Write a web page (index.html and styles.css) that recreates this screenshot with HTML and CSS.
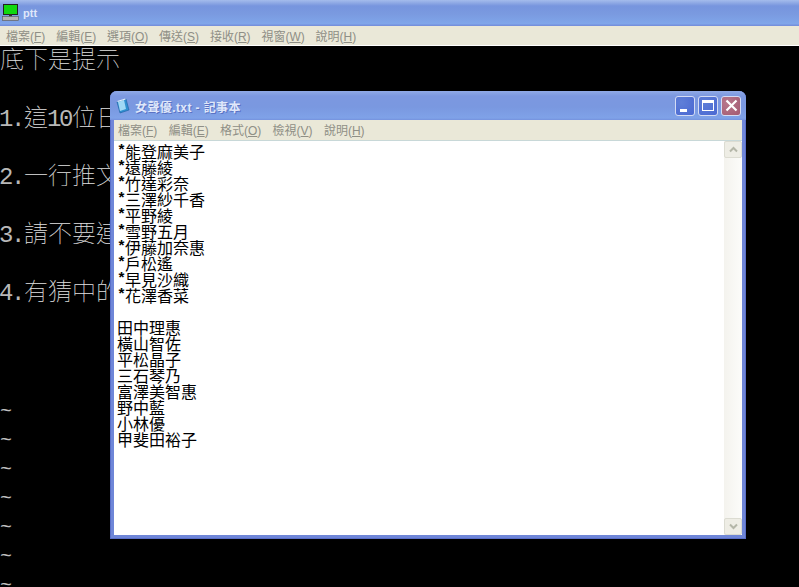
FILE: index.html
```html
<!DOCTYPE html>
<html lang="zh-Hant">
<head>
<meta charset="utf-8">
<title>ptt</title>
<link rel="stylesheet" href="styles.css">
</head>
<body>
<div class="desktop">
  <div class="term-window">
    <header class="term-title">
      <svg class="term-icon" width="17" height="17" viewBox="0 0 17 17">
        <rect x="1.5" y="0.5" width="14" height="10" fill="#10d810" stroke="#222"/>
        <rect x="7" y="10.5" width="3" height="2" fill="#333"/>
        <rect x="0.5" y="12.5" width="16" height="4" fill="#b4b4b4" stroke="#555" stroke-width="0.6"/>
      </svg>
      <span class="term-name">ptt</span>
    </header>
    <nav class="menubar term-menu">
      <span>檔案(<u>F</u>)</span><span>編輯(<u>E</u>)</span><span>選項(<u>O</u>)</span><span>傳送(<u>S</u>)</span><span>接收(<u>R</u>)</span><span>視窗(<u>W</u>)</span><span>說明(<u>H</u>)</span>
    </nav>
    <main class="screen">
      <div class="screen-line">底下是提示</div>
      <div class="screen-line"></div>
      <div class="screen-line"><span class="half">1.</span>這<span class="half">10</span>位日</div>
      <div class="screen-line"></div>
      <div class="screen-line"><span class="half">2.</span>一行推文</div>
      <div class="screen-line"></div>
      <div class="screen-line"><span class="half">3.</span>請不要連</div>
      <div class="screen-line"></div>
      <div class="screen-line"><span class="half">4.</span>有猜中的</div>
      <div class="screen-line"></div>
      <div class="screen-line"></div>
      <div class="screen-line"></div>
      <div class="tilde">~</div>
      <div class="tilde">~</div>
      <div class="tilde">~</div>
      <div class="tilde">~</div>
      <div class="tilde">~</div>
      <div class="tilde">~</div>
      <div class="tilde">~</div>
    </main>
  </div>

  <section class="notepad">
    <header class="np-title">
      <svg class="np-icon" width="16" height="16" viewBox="0 0 16 16">
        <path d="M2 4 L11 1 L14 12 L5 15 Z" fill="#2f8fd0" stroke="#1c5f9f" stroke-width="0.6"/>
        <path d="M3 4 L9 2 L11 11 L5 13 Z" fill="#9fd8f5"/>
        <path d="M2.5 3.5 L10.5 1" stroke="#e8f4ff" stroke-width="1.2" fill="none"/>
      </svg>
      <span class="np-name">女聲優.txt - 記事本</span>
      <div class="np-buttons">
        <span class="np-btn np-min"><i></i></span>
        <span class="np-btn np-max"><i></i></span>
        <span class="np-btn np-close">
          <svg width="13" height="13" viewBox="0 0 13 13"><path d="M1.5 1.5 L11.5 11.5 M11.5 1.5 L1.5 11.5" stroke="#fff" stroke-width="2.2"/></svg>
        </span>
      </div>
    </header>
    <nav class="menubar np-menu">
      <span>檔案(<u>F</u>)</span><span>編輯(<u>E</u>)</span><span>格式(<u>O</u>)</span><span>檢視(<u>V</u>)</span><span>說明(<u>H</u>)</span>
    </nav>
    <div class="np-client">
      <div class="np-text">
        <div><b>*</b>能登麻美子</div>
        <div><b>*</b>遠藤綾</div>
        <div><b>*</b>竹達彩奈</div>
        <div><b>*</b>三澤紗千香</div>
        <div><b>*</b>平野綾</div>
        <div><b>*</b>雪野五月</div>
        <div><b>*</b>伊藤加奈惠</div>
        <div><b>*</b>戶松遙</div>
        <div><b>*</b>早見沙織</div>
        <div><b>*</b>花澤香菜</div>
        <div class="np-blank"></div>
        <div>田中理惠</div>
        <div>橫山智佐</div>
        <div>平松晶子</div>
        <div>三石琴乃</div>
        <div>富澤美智惠</div>
        <div>野中藍</div>
        <div>小林優</div>
        <div>甲斐田裕子</div>
      </div>
      <div class="np-scroll">
        <span class="np-arrow">
          <svg width="9" height="7" viewBox="0 0 9 7"><path d="M1 5.5 L4.5 2 L8 5.5" fill="none" stroke="#b4b6a8" stroke-width="2"/></svg>
        </span>
        <span class="np-arrow">
          <svg width="9" height="7" viewBox="0 0 9 7"><path d="M1 1.5 L4.5 5 L8 1.5" fill="none" stroke="#b4b6a8" stroke-width="2"/></svg>
        </span>
      </div>
    </div>
  </section>
</div>
</body>
</html>
```

FILE: styles.css
```css
* { box-sizing: border-box; }

html, body {
  margin: 0;
  padding: 0;
  width: 799px;
  height: 587px;
  overflow: hidden;
  background: #000;
}

.desktop {
  position: relative;
  width: 799px;
  height: 587px;
  overflow: hidden;
}

.term-window {
  display: flex;
  flex-direction: column;
  height: 587px;
}

.term-title {
  height: 26px;
  flex: none;
  display: flex;
  align-items: center;
  gap: 4px;
  padding: 0 0 1px 2px;
  background: linear-gradient(#a4bcec 0, #8ea8e4 3px, #7795de 6px, #7a9ae0 14px, #80a6ea 24px, #7590dc 25px, #7590dc 26px);
}

.term-name,
.np-name {
  font-family: "Liberation Sans", "Noto Sans CJK TC", sans-serif;
  font-weight: 700;
  color: #dfe7fa;
}

.term-name {
  padding-top: 1px;
  font-size: 11px;
}

.menubar {
  display: flex;
  align-items: center;
  background: #eae8d8;
  font-family: "Liberation Sans", "Noto Sans CJK TC", sans-serif;
  font-size: 12px;
  color: #8f8f86;
}

.term-menu {
  height: 20px;
  flex: none;
  padding-left: 6px;
  border-bottom: 1px solid #fff;
}

.term-menu span { margin-right: 10.8px; }

.screen {
  flex: 1;
  padding-top: 1px;
  background: #000;
  color: #e2e2e2;
  font-family: "Liberation Mono", "Noto Sans CJK TC", monospace;
  font-size: 24px;
  font-weight: 100;
}

.screen-line {
  height: 29px;
  line-height: 29px;
  white-space: nowrap;
}

.half {
  letter-spacing: -2.4px;
  color: #b8b8b8;
  margin-left: -1px;
  margin-right: 1px;
}

.tilde {
  height: 29px;
  line-height: 33px;
  font-size: 20px;
  color: #c0c0c0;
}

.notepad {
  position: absolute;
  left: 110px;
  top: 91px;
  width: 636px;
  height: 448px;
  display: flex;
  flex-direction: column;
  padding: 0 4px 4px;
  background: #6f86d8;
  border-radius: 7px 7px 0 0;
  box-shadow: inset 1px 0 #5a6fc8, inset -1px 0 #5a6fc8, inset 0 -1px #5a6fc8;
}

.np-title {
  height: 29px;
  flex: none;
  display: flex;
  align-items: center;
  gap: 4px;
  margin: 0 -4px;
  padding: 0 4px 0 5px;
  border-radius: 7px 7px 0 0;
  background: linear-gradient(#90aae6 0, #7c98e0 5px, #7a98e0 16px, #7fa2e8 27px, #7592dd 29px);
}

.np-name {
  flex: 1;
  padding-top: 1px;
  font-size: 12px;
  letter-spacing: 0.4px;
  text-shadow: 1px 1px 0 #5a72c4;
}

.np-buttons {
  display: flex;
  gap: 3px;
  margin-right: 1px;
}

.np-btn {
  width: 20px;
  height: 20px;
  border: 1px solid #d4dcf4;
  border-radius: 3px;
  display: flex;
  align-items: center;
  justify-content: center;
  position: relative;
  background: radial-gradient(circle at 30% 30%, #5f7fd8, #4a68d2);
}

.np-min i {
  position: absolute;
  left: 4px;
  bottom: 3px;
  width: 7px;
  height: 3px;
  background: #fff;
}

.np-max i {
  width: 12px;
  height: 11px;
  border: 1px solid #fff;
  border-top-width: 3px;
}

.np-close {
  background: radial-gradient(circle at 30% 30%, #b8788c, #a45a72);
}

.np-menu {
  height: 21px;
  flex: none;
  padding-left: 4px;
  padding-bottom: 1px;
  border-bottom: 1px solid #c8d8d8;
}

.np-menu span { margin-right: 11.3px; }

.np-client {
  flex: 1;
  display: flex;
  background: #fff;
  min-height: 0;
}

.np-text {
  flex: 1;
  padding: 2px 0 0 3px;
  font-family: "Noto Sans CJK TC", sans-serif;
  font-size: 16px;
  font-weight: 400;
  line-height: 16px;
  color: #000;
  white-space: nowrap;
}

.np-text > div { height: 16px; }

.np-text b {
  display: inline-block;
  width: 8px;
  height: 16px;
  vertical-align: top;
  font-family: "Liberation Mono", monospace;
  font-size: 15px;
  font-weight: 700;
  line-height: 18px;
}

.np-scroll {
  width: 18px;
  flex: none;
  display: flex;
  flex-direction: column;
  justify-content: space-between;
  background: linear-gradient(90deg, #f4f3ee, #fcfcfa);
}

.np-arrow {
  height: 17px;
  display: flex;
  align-items: center;
  justify-content: center;
  background: #eeede5;
  border: 1px solid #dcdcd2;
  border-radius: 2px;
}
```
